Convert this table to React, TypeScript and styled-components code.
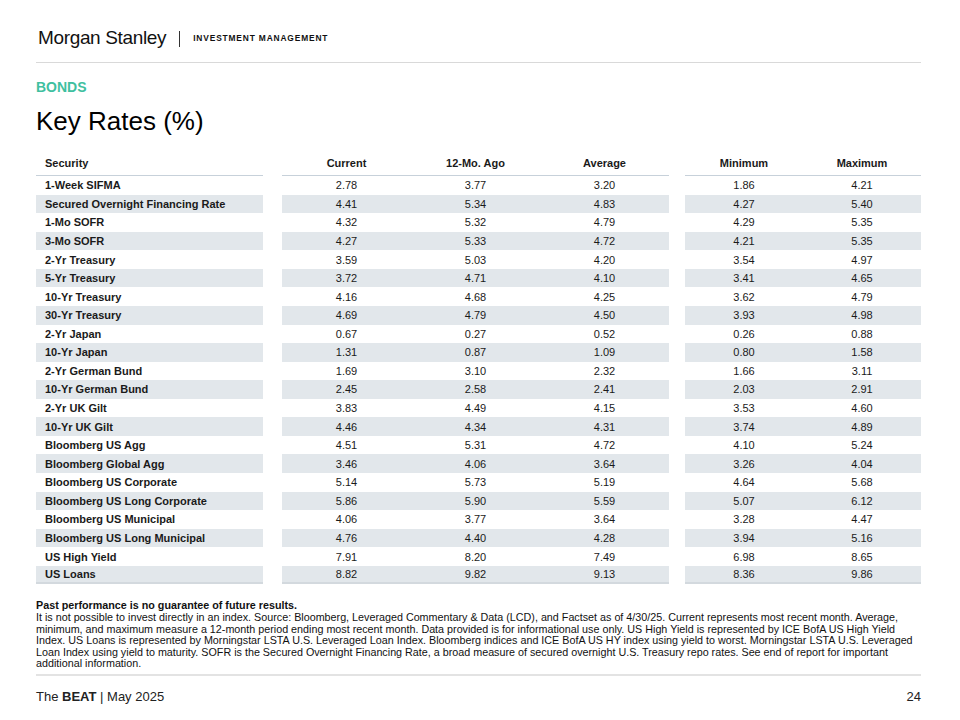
import React from 'react';
import styled, { createGlobalStyle } from 'styled-components';

const GlobalStyle = createGlobalStyle`
  html, body {
    margin: 0;
    padding: 0;
    background: #ffffff;
  }
  body {
    font-family: "Liberation Sans", Arial, Helvetica, sans-serif;
    color: #1a1a1a;
  }
`;

const Page = styled.div`
  width: 960px;
  height: 720px;
  box-sizing: border-box;
  padding: 0 39px 0 36px;
  display: flex;
  flex-direction: column;
  overflow: hidden;
`;

const TopBar = styled.div`
  height: 63px;
  box-sizing: border-box;
  padding: 28px 0 0 2px;
  border-bottom: 1px solid #d9d9d9;
  display: flex;
  align-items: flex-start;
`;

const Logo = styled.div`
  font-size: 19px;
  letter-spacing: -0.35px;
  line-height: 20px;
  color: #111;
`;

const LogoDivider = styled.div`
  width: 1px;
  height: 16px;
  background: #333;
  margin: 3px 13px 0 13px;
`;

const Division = styled.div`
  font-size: 8.4px;
  font-weight: 700;
  letter-spacing: 0.85px;
  line-height: 20px;
  color: #111;
`;

const Kicker = styled.div`
  margin-top: 16px;
  font-size: 14px;
  font-weight: 700;
  line-height: 16px;
  color: #3fc0a0;
`;

const Title = styled.h1`
  margin: 10px 0 0 0;
  font-size: 26px;
  font-weight: 400;
  line-height: 32px;
  color: #000;
`;

const Table = styled.div`
  margin-top: 15px;
  display: flex;
  flex-direction: column;
`;

const Row = styled.div<{ $head?: boolean }>`
  display: flex;
  height: ${p => (p.$head ? '24px' : '18.57px')};
  font-size: 11px;
  font-weight: ${p => (p.$head ? 700 : 400)};
`;

const Group = styled.div<{ $w: number; $cols: number; $gap?: number; $shade?: boolean; $rule?: string }>`
  width: ${p => p.$w}px;
  margin-left: ${p => p.$gap ?? 0}px;
  display: grid;
  grid-template-columns: repeat(${p => p.$cols}, 1fr);
  align-items: center;
  background: ${p => (p.$shade ? '#e2e7eb' : 'transparent')};
  border-bottom: ${p => p.$rule ?? 'none'};
  box-sizing: border-box;
`;

const NameCell = styled.div<{ $head?: boolean }>`
  padding-left: 9px;
  font-weight: 700;
  padding-bottom: ${p => (p.$head ? '2px' : '0')};
  white-space: nowrap;
`;

const NumCell = styled.div<{ $head?: boolean }>`
  text-align: center;
  padding-bottom: ${p => (p.$head ? '2px' : '0')};
`;

const Notes = styled.div`
  margin-top: 16px;
  font-size: 10.75px;
  line-height: 11.6px;
  color: #111;
  padding-bottom: 4px;
  border-bottom: 2px solid #e3e3e3;
  white-space: nowrap;
`;

const NotesLead = styled.div`
  font-weight: 700;
`;

const Footer = styled.div`
  display: flex;
  justify-content: space-between;
  align-items: center;
  margin-top: 13px;
  font-size: 13px;
  line-height: 16px;
  color: #222;
`;

const FooterLabel = styled.div`
  b {
    font-weight: 700;
  }
`;

type Rate = [string, string, string, string, string, string];

const rates: Rate[] = [
  ['1-Week SIFMA', '2.78', '3.77', '3.20', '1.86', '4.21'],
  ['Secured Overnight Financing Rate', '4.41', '5.34', '4.83', '4.27', '5.40'],
  ['1-Mo SOFR', '4.32', '5.32', '4.79', '4.29', '5.35'],
  ['3-Mo SOFR', '4.27', '5.33', '4.72', '4.21', '5.35'],
  ['2-Yr Treasury', '3.59', '5.03', '4.20', '3.54', '4.97'],
  ['5-Yr Treasury', '3.72', '4.71', '4.10', '3.41', '4.65'],
  ['10-Yr Treasury', '4.16', '4.68', '4.25', '3.62', '4.79'],
  ['30-Yr Treasury', '4.69', '4.79', '4.50', '3.93', '4.98'],
  ['2-Yr Japan', '0.67', '0.27', '0.52', '0.26', '0.88'],
  ['10-Yr Japan', '1.31', '0.87', '1.09', '0.80', '1.58'],
  ['2-Yr German Bund', '1.69', '3.10', '2.32', '1.66', '3.11'],
  ['10-Yr German Bund', '2.45', '2.58', '2.41', '2.03', '2.91'],
  ['2-Yr UK Gilt', '3.83', '4.49', '4.15', '3.53', '4.60'],
  ['10-Yr UK Gilt', '4.46', '4.34', '4.31', '3.74', '4.89'],
  ['Bloomberg US Agg', '4.51', '5.31', '4.72', '4.10', '5.24'],
  ['Bloomberg Global Agg', '3.46', '4.06', '3.64', '3.26', '4.04'],
  ['Bloomberg US Corporate', '5.14', '5.73', '5.19', '4.64', '5.68'],
  ['Bloomberg US Long Corporate', '5.86', '5.90', '5.59', '5.07', '6.12'],
  ['Bloomberg US Municipal', '4.06', '3.77', '3.64', '3.28', '4.47'],
  ['Bloomberg US Long Municipal', '4.76', '4.40', '4.28', '3.94', '5.16'],
  ['US High Yield', '7.91', '8.20', '7.49', '6.98', '8.65'],
  ['US Loans', '8.82', '9.82', '9.13', '8.36', '9.86'],
];

const notes = [
  'It is not possible to invest directly in an index. Source: Bloomberg, Leveraged Commentary & Data (LCD), and Factset as of 4/30/25. Current represents most recent month. Average,',
  'minimum, and maximum measure a 12-month period ending most recent month. Data provided is for informational use only. US High Yield is represented by ICE BofA US High Yield',
  'Index. US Loans is represented by Morningstar LSTA U.S. Leveraged Loan Index. Bloomberg indices and ICE BofA US HY index using yield to worst. Morningstar LSTA U.S. Leveraged',
  'Loan Index using yield to maturity. SOFR is the Secured Overnight Financing Rate, a broad measure of secured overnight U.S. Treasury repo rates. See end of report for important',
  'additional information.',
];

const headRule = '1px solid #c7d1da';
const footRule = '2px solid #d3d9de';

const App: React.FC = () => {
  return (
    <>
      <GlobalStyle />
      <Page>
        <TopBar>
          <Logo>Morgan Stanley</Logo>
          <LogoDivider />
          <Division>INVESTMENT MANAGEMENT</Division>
        </TopBar>

        <Kicker>BONDS</Kicker>
        <Title>Key Rates (%)</Title>

        <Table>
          <Row $head>
            <Group $w={227} $cols={1} $rule={headRule}>
              <NameCell $head>Security</NameCell>
            </Group>
            <Group $w={387} $cols={3} $gap={19} $rule={headRule}>
              <NumCell $head>Current</NumCell>
              <NumCell $head>12-Mo. Ago</NumCell>
              <NumCell $head>Average</NumCell>
            </Group>
            <Group $w={236} $cols={2} $gap={16} $rule={headRule}>
              <NumCell $head>Minimum</NumCell>
              <NumCell $head>Maximum</NumCell>
            </Group>
          </Row>

          {rates.map((r, i) => {
            const shade = i % 2 === 1;
            const rule = i === rates.length - 1 ? footRule : undefined;
            return (
              <Row key={r[0]}>
                <Group $w={227} $cols={1} $shade={shade} $rule={rule}>
                  <NameCell>{r[0]}</NameCell>
                </Group>
                <Group $w={387} $cols={3} $gap={19} $shade={shade} $rule={rule}>
                  <NumCell>{r[1]}</NumCell>
                  <NumCell>{r[2]}</NumCell>
                  <NumCell>{r[3]}</NumCell>
                </Group>
                <Group $w={236} $cols={2} $gap={16} $shade={shade} $rule={rule}>
                  <NumCell>{r[4]}</NumCell>
                  <NumCell>{r[5]}</NumCell>
                </Group>
              </Row>
            );
          })}
        </Table>

        <Notes>
          <NotesLead>Past performance is no guarantee of future results.</NotesLead>
          {notes.map(line => (
            <div key={line}>{line}</div>
          ))}
        </Notes>

        <Footer>
          <FooterLabel>
            The <b>BEAT</b> | May 2025
          </FooterLabel>
          <div>24</div>
        </Footer>
      </Page>
    </>
  );
};

export default App;
